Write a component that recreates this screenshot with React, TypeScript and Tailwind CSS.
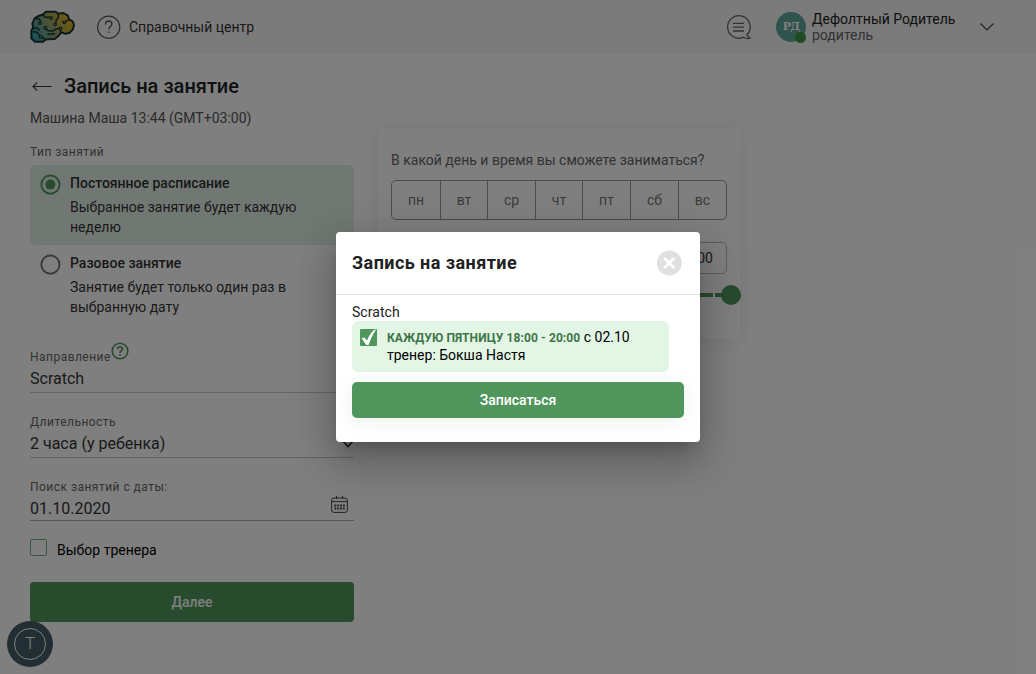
import React from "react";

const days = [
  { label: "пн", w: "w-[49px]" },
  { label: "вт", w: "w-[47px]" },
  { label: "ср", w: "w-[48px]" },
  { label: "чт", w: "w-[47px]" },
  { label: "пт", w: "w-[48px]" },
  { label: "сб", w: "w-[48px]" },
  { label: "вс", w: "w-[47px]" },
];

function Brain() {
  return (
    <svg width="48" height="36" viewBox="87 28 144 108" fill="none">
      <defs>
        <linearGradient id="brain" x1="98" y1="118" x2="212" y2="52" gradientUnits="userSpaceOnUse">
          <stop offset="0" stopColor="#2fa0b4" />
          <stop offset="0.3" stopColor="#6ba590" />
          <stop offset="0.6" stopColor="#aaa85c" />
          <stop offset="1" stopColor="#e8b414" />
        </linearGradient>
      </defs>
      <g stroke="#1a3434" strokeWidth="6" strokeLinejoin="round" strokeLinecap="round">
        <path
          d="M128 45L138 36H166L175 42L190 40L204 48L207 59L218 65L222 76L218 90L208 100L194 102L184 98L176 108L164 118L144 119L136 120L130 126H104L94 116V92L100 85L97 72L104 56L117 48Z"
          fill="url(#brain)"
        />
        <path d="M128 45L136 53H148M175 42V54L168 62V70M207 59L196 67H190M104 56L118 58L122 66M97 85H112L118 91M135 86L144 93L158 94L170 87H180M184 98L180 92M100 96L112 98L118 108M136 120L128 113M144 104L164 102" strokeWidth="4.5" />
        <g fill="#a8b478" strokeWidth="3.5">
          <circle cx="153" cy="55" r="4" />
          <circle cx="120" cy="70" r="4" />
          <circle cx="165" cy="74" r="4" />
          <circle cx="193" cy="68" r="4" />
          <circle cx="136" cy="84" r="4" />
          <circle cx="182" cy="86" r="4" />
          <circle cx="122" cy="112" r="4" />
        </g>
      </g>
    </svg>
  );
}

function Header() {
  return (
    <header className="flex h-[54px] items-center bg-[#f7f7f7] pl-[29px] pr-[42px]">
      <Brain />
      <svg className="ml-5" width="24" height="24" viewBox="0 0 24 24" fill="none" stroke="#555" strokeWidth="1.1">
        <circle cx="11.7" cy="12.2" r="11.1" />
        <path d="M8.5 9.4C8.5 7.2 9.8 6 11.7 6s3.2 1.2 3.2 3c0 2.3-3.1 2.7-3.1 5.6" strokeWidth="1.3" />
        <circle cx="11.8" cy="17.2" r=".5" fill="#555" strokeWidth=".6" />
      </svg>
      <span className="ml-2 text-[14px] text-[#333]">Справочный центр</span>
      <svg className="ml-auto" width="26" height="26" viewBox="0 0 26 26" fill="none" stroke="#666" strokeWidth="1.3">
        <path d="M21 20.8A11.3 11.3 0 1 0 17.6 23.2C19.6 24.4 22.2 24.8 24.2 24.2C22.6 23.3 21.4 22.2 21 20.8Z" strokeLinejoin="round" />
        <path d="M7 9.4h11M7 13.2h11M7 17h11" />
      </svg>
      <div className="relative ml-6 flex size-[30px] items-center justify-center rounded-full bg-[#5fa69a]">
        <span className="-mt-px font-['DejaVu_Serif',serif] text-[11px] font-bold leading-none tracking-[-0.9px] text-white">РД</span>
        <span className="absolute -bottom-[1px] right-0 size-[11px] rounded-full bg-[#3f9641]" />
      </div>
      <div className="ml-[6px] w-[150px] text-[14px] leading-4">
        <div className="text-[#212121]">Дефолтный Родитель</div>
        <div className="text-[#666]">родитель</div>
      </div>
      <svg className="ml-[18px]" width="14" height="9" viewBox="0 0 14 9" fill="none" stroke="#444" strokeWidth="1.2">
        <path d="M.5 .5L7 7L13.5 .5" />
      </svg>
    </header>
  );
}

function Option({ title, text, active }: { title: string; text: React.ReactNode; active?: boolean }) {
  return (
    <div className={active ? "flex h-20 rounded-[5px] bg-[#e2f1e6] pl-[10px] pt-2" : "flex h-20 pl-[10px] pt-2"}>
      <svg className="mt-[1px] shrink-0" width="21" height="21" viewBox="0 0 21 21" fill="none">
        <circle cx="10.4" cy="10.6" r="9.1" stroke={active ? "#50965c" : "#757575"} strokeWidth="1.9" />
        {active && <circle cx="10.4" cy="10.6" r="5" fill="#50965c" />}
      </svg>
      <div className="ml-[9px] whitespace-nowrap text-[14px] leading-5 text-[#333]">
        <div className="h-[24px] font-medium">{title}</div>
        <div>{text}</div>
      </div>
    </div>
  );
}

const labelClass = "text-[12px] leading-4 tracking-[0.47px] text-[#666]";

function Form() {
  return (
    <div className="w-[324px] pt-5">
      <div className="flex h-6 items-center">
        <svg className="ml-[2px]" width="21" height="12" viewBox="0 0 21 12" fill="none" stroke="#333" strokeWidth="1.1">
          <path d="M19.5 6.5H1.2M5.2 2.3L1 6.5L5.2 10.7" />
        </svg>
        <h1 className="ml-[11px] text-[20px] font-medium leading-6 text-[#212121]">Запись на занятие</h1>
      </div>
      <div className="mt-[10px] text-[14px] leading-5 text-[#555]">Машина Маша 13:44 (GMT+03:00)</div>
      <div className="mt-4 h-[21px]"><div className={labelClass}>Тип занятий</div></div>
      <Option active title="Постоянное расписание" text={<>Выбранное занятие будет каждую<br />неделю</>} />
      <Option title="Разовое занятие" text={<>Занятие будет только один раз в<br />выбранную дату</>} />

      <div className="mt-[10px] flex h-[58px] flex-col justify-end border-b border-[#c8c8c8] pb-[3px]">
        <div className="flex h-6 items-end">
          <span className={labelClass}>Направление</span>
          <svg className="mb-[5px]" width="18" height="18" viewBox="0 0 18 18" fill="none" stroke="#50965c" strokeWidth="1.6">
            <circle cx="9" cy="9" r="7.8" />
            <path d="M6.6 7.2C6.6 5.7 7.6 4.8 9 4.8s2.4.9 2.4 2.2C11.4 8.6 9 8.9 9 11" />
            <path d="M9 12.2v1.7" />
          </svg>
        </div>
        <div className="mt-1 text-[16px] leading-5 text-[#333]">Scratch</div>
      </div>
      <div className="mt-[21px] h-[44px] border-b border-[#c8c8c8]">
        <div className={labelClass}>Длительность</div>
        <div className="mt-[2px] flex items-center justify-between text-[16px] leading-6 text-[#333]">
          2 часа (у ребенка)
          <svg width="12" height="8" viewBox="0 0 12 8" fill="none" stroke="#333" strokeWidth="1.8"><path d="M1 1l5 5.5L11 1" /></svg>
        </div>
      </div>
      <div className="mt-[21px] h-[42px] border-b border-[#b0b0b0]">
        <div className={labelClass}>Поиск занятий с даты:</div>
        <div className="flex items-center justify-between pr-[6px] text-[16px] leading-6 text-[#333]">
          <span className="mt-[2px]">01.10.2020</span>
          <svg className="-mt-[7px]" width="17" height="17" viewBox="0 0 17 17" fill="none" stroke="#444">
            <rect x=".6" y="2" width="15.8" height="14.4" rx="2.4" />
            <path d="M.6 5.6h15.8M5.5 0v3M11.5 0v3" />
            <path d="M3.4 9.4h10.4M3.4 12.6h10.4" strokeWidth="2" strokeDasharray="1.9 .93" />
          </svg>
        </div>
      </div>
      <div className="mt-[18px] flex h-[22px] items-start">
        <span className="size-[17px] rounded-[2px] border border-[#75ad7f]" />
        <span className="ml-[10px] mt-px text-[14px] leading-5 text-black">Выбор тренера</span>
      </div>
      <button className="mt-[21px] flex h-10 w-full items-center justify-center rounded-[4px] bg-[#50965c] pt-px text-[14px] font-medium text-white">
        Далее
      </button>
    </div>
  );
}

function Schedule() {
  return (
    <section className="ml-6 mt-[74px] h-[211px] w-[362px] rounded-[4px] bg-white px-[13px] pt-[22px] shadow-[0_0_20px_rgba(0,0,0,0.08)]">
      <div className="whitespace-nowrap text-[14px] leading-5 text-[#666]">В какой день и время вы сможете заниматься?</div>
      <div className="mt-[10px] flex h-10 w-[336px] divide-x divide-[#999] rounded-[5px] border border-[#999] text-[14px] text-[#777]">
        {days.map((d) => (
          <div key={d.label} className={d.w + " flex grow items-center justify-center"}>{d.label}</div>
        ))}
      </div>
      <div className="ml-auto mt-[22px] flex h-8 w-[100px] items-center justify-end rounded-[5px] border border-[#bbb] pr-[13px] text-[14px] text-[#333]">20:00</div>
      <div className="-mr-[14px] mt-[11px] flex h-5 items-center justify-end">
        <span className="h-[4px] w-[100px] bg-[#50965c]" />
        <span className="ml-[2px] h-[4px] w-[7px] bg-[#50965c]" />
        <span className="-ml-px size-5 rounded-full bg-[#50965c]" />
      </div>
    </section>
  );
}

function Dialog() {
  return (
    <div className="h-[210px] w-[364px] rounded-[4px] bg-white shadow-[0_11px_15px_-7px_rgba(0,0,0,0.2),0_24px_38px_3px_rgba(0,0,0,0.14),0_9px_46px_8px_rgba(0,0,0,0.12)]">
      <div className="flex h-[63px] items-center justify-between border-b border-[#e0e0e0] pl-4 pr-[18px]">
        <h2 className="text-[18px] font-bold leading-6 tracking-[0.44px] text-[#212121]">Запись на занятие</h2>
        <svg width="26" height="26" viewBox="0 0 26 26">
          <circle cx="13.3" cy="13" r="12.4" fill="#e0e0e0" />
          <path d="M8 7.8l10.4 10.4M18.4 7.8L8 18.2" stroke="#fff" strokeWidth="2.6" />
        </svg>
      </div>
      <div className="px-4 pt-2">
        <div className="h-[18px] text-[14px] leading-[18px] tracking-[0.05px] text-[#212121]">Scratch</div>
        <div className="flex h-[51px] w-[317px] rounded-[6px] bg-[#e3f6e6] pl-2 pt-2">
          <svg width="17" height="17" viewBox="0 0 17 17">
            <rect width="17" height="17" rx="1" fill="#50965c" />
            <path d="M1.6 9.2L4.4 8.4L7 11.4C8.8 7.4 11 3.6 14.2 .8H16C12.8 5.4 10.4 10.5 8.6 16H6.2Z" fill="#fff" />
          </svg>
          <div className="ml-[10px] whitespace-nowrap text-[14px] leading-[17px] text-black">
            <div><span className="text-[12px] font-bold tracking-[0.09px] text-[#3d7547]">КАЖДУЮ ПЯТНИЦУ 18:00 - 20:00</span> с 02.10</div>
            <div>тренер: Бокша Настя</div>
          </div>
        </div>
        <button className="mt-[10px] flex h-9 w-full items-center justify-center rounded-[5px] bg-[#50965c] text-[14px] font-medium text-white shadow-[0_3px_20px_rgba(80,150,92,0.12)]">
          Записаться
        </button>
      </div>
    </div>
  );
}

export default function App() {
  return (
    <div className="relative h-[674px] w-[1036px] overflow-hidden bg-white font-['Roboto',sans-serif]">
      <Header />
      <main className="flex items-start pl-[30px]">
        <Form />
        <Schedule />
      </main>
      <div className="absolute left-[7px] top-[621px] flex size-[46px] items-center justify-center rounded-full bg-[#465c69]">
        <div className="flex size-8 items-center justify-center rounded-full border border-white text-[17px] font-light text-white">T</div>
      </div>
      <div className="absolute inset-0 flex items-center justify-center bg-black/50">
        <Dialog />
      </div>
    </div>
  );
}
